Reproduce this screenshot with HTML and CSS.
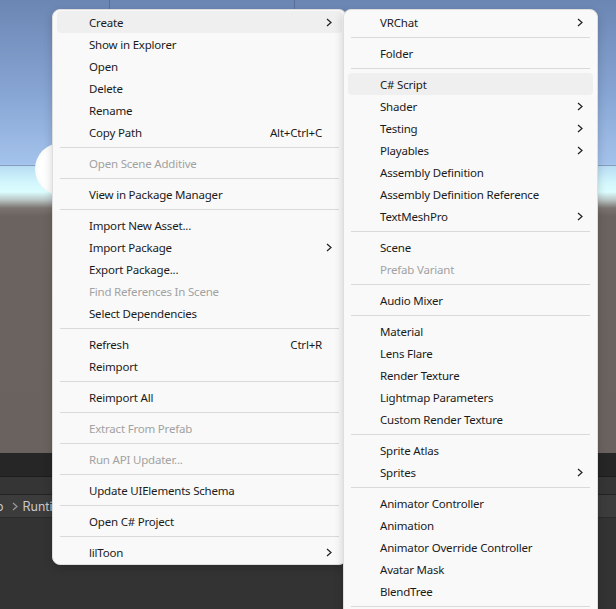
FILE: index.html
```html
<!DOCTYPE html>
<html lang="en">
<head>
    <meta charset="UTF-8">
    <title>Project context menu</title>
    <link rel="stylesheet" href="styles.css">
</head>
<body>
    <div id="editor">
        <div class="scene-view">
            <div class="grid-line vertical" style="left: 109px;"></div>
            <div class="grid-line vertical" style="left: 294px;"></div>
            <div class="grid-line horizontal"></div>
            <div class="gizmo-circle"></div>
        </div>
        <div class="toolbar-strip"></div>
        <div class="tab-strip"></div>
        <div class="breadcrumb">
            <span class="crumb-cut">o</span>
            <svg class="crumb-arrow" width="6" height="9" viewBox="0 0 6 9"><polyline points="1,1 5,4.5 1,8" fill="none" stroke="#9a9a9a" stroke-width="1.2"/></svg>
            <span class="crumb">Runtime</span>
        </div>
        <div class="project-panel"></div>
    </div>

    <!-- main context menu -->
    <div class="menu" id="mainMenu">
        <div class="item active"><span class="label">Create</span><span class="sub"><svg width="6" height="9" viewBox="0 0 6 9"><polyline points="1,1 5,4.5 1,8"/></svg></span></div>
        <div class="item"><span class="label">Show in Explorer</span><span class="sub"></span></div>
        <div class="item"><span class="label">Open</span><span class="sub"></span></div>
        <div class="item"><span class="label">Delete</span><span class="sub"></span></div>
        <div class="item"><span class="label">Rename</span><span class="sub"></span></div>
        <div class="item"><span class="label">Copy Path</span><span class="shortcut">Alt+Ctrl+C</span><span class="sub"></span></div>
        <div class="sep"></div>
        <div class="item disabled"><span class="label">Open Scene Additive</span><span class="sub"></span></div>
        <div class="sep"></div>
        <div class="item"><span class="label">View in Package Manager</span><span class="sub"></span></div>
        <div class="sep"></div>
        <div class="item"><span class="label">Import New Asset...</span><span class="sub"></span></div>
        <div class="item"><span class="label">Import Package</span><span class="sub"><svg width="6" height="9" viewBox="0 0 6 9"><polyline points="1,1 5,4.5 1,8"/></svg></span></div>
        <div class="item"><span class="label">Export Package...</span><span class="sub"></span></div>
        <div class="item disabled"><span class="label">Find References In Scene</span><span class="sub"></span></div>
        <div class="item"><span class="label">Select Dependencies</span><span class="sub"></span></div>
        <div class="sep"></div>
        <div class="item"><span class="label">Refresh</span><span class="shortcut">Ctrl+R</span><span class="sub"></span></div>
        <div class="item"><span class="label">Reimport</span><span class="sub"></span></div>
        <div class="sep"></div>
        <div class="item"><span class="label">Reimport All</span><span class="sub"></span></div>
        <div class="sep"></div>
        <div class="item disabled"><span class="label">Extract From Prefab</span><span class="sub"></span></div>
        <div class="sep"></div>
        <div class="item disabled"><span class="label">Run API Updater...</span><span class="sub"></span></div>
        <div class="sep"></div>
        <div class="item"><span class="label">Update UIElements Schema</span><span class="sub"></span></div>
        <div class="sep"></div>
        <div class="item"><span class="label">Open C# Project</span><span class="sub"></span></div>
        <div class="sep"></div>
        <div class="item"><span class="label">lilToon</span><span class="sub"><svg width="6" height="9" viewBox="0 0 6 9"><polyline points="1,1 5,4.5 1,8"/></svg></span></div>
    </div>

    <!-- Create submenu -->
    <div class="menu" id="createMenu">
        <div class="item"><span class="label">VRChat</span><span class="sub"><svg width="6" height="9" viewBox="0 0 6 9"><polyline points="1,1 5,4.5 1,8"/></svg></span></div>
        <div class="sep"></div>
        <div class="item"><span class="label">Folder</span><span class="sub"></span></div>
        <div class="sep"></div>
        <div class="item active"><span class="label">C# Script</span><span class="sub"></span></div>
        <div class="item"><span class="label">Shader</span><span class="sub"><svg width="6" height="9" viewBox="0 0 6 9"><polyline points="1,1 5,4.5 1,8"/></svg></span></div>
        <div class="item"><span class="label">Testing</span><span class="sub"><svg width="6" height="9" viewBox="0 0 6 9"><polyline points="1,1 5,4.5 1,8"/></svg></span></div>
        <div class="item"><span class="label">Playables</span><span class="sub"><svg width="6" height="9" viewBox="0 0 6 9"><polyline points="1,1 5,4.5 1,8"/></svg></span></div>
        <div class="item"><span class="label">Assembly Definition</span><span class="sub"></span></div>
        <div class="item"><span class="label">Assembly Definition Reference</span><span class="sub"></span></div>
        <div class="item"><span class="label">TextMeshPro</span><span class="sub"><svg width="6" height="9" viewBox="0 0 6 9"><polyline points="1,1 5,4.5 1,8"/></svg></span></div>
        <div class="sep"></div>
        <div class="item"><span class="label">Scene</span><span class="sub"></span></div>
        <div class="item disabled"><span class="label">Prefab Variant</span><span class="sub"></span></div>
        <div class="sep"></div>
        <div class="item"><span class="label">Audio Mixer</span><span class="sub"></span></div>
        <div class="sep"></div>
        <div class="item"><span class="label">Material</span><span class="sub"></span></div>
        <div class="item"><span class="label">Lens Flare</span><span class="sub"></span></div>
        <div class="item"><span class="label">Render Texture</span><span class="sub"></span></div>
        <div class="item"><span class="label">Lightmap Parameters</span><span class="sub"></span></div>
        <div class="item"><span class="label">Custom Render Texture</span><span class="sub"></span></div>
        <div class="sep"></div>
        <div class="item"><span class="label">Sprite Atlas</span><span class="sub"></span></div>
        <div class="item"><span class="label">Sprites</span><span class="sub"><svg width="6" height="9" viewBox="0 0 6 9"><polyline points="1,1 5,4.5 1,8"/></svg></span></div>
        <div class="sep"></div>
        <div class="item"><span class="label">Animator Controller</span><span class="sub"></span></div>
        <div class="item"><span class="label">Animation</span><span class="sub"></span></div>
        <div class="item"><span class="label">Animator Override Controller</span><span class="sub"></span></div>
        <div class="item"><span class="label">Avatar Mask</span><span class="sub"></span></div>
        <div class="item"><span class="label">BlendTree</span><span class="sub"></span></div>
        <div class="sep"></div>
        <div class="sep"></div>
    </div>
</body>
</html>
```

FILE: styles.css
```css
body {
    margin: 0;
    width: 616px;
    height: 609px;
    overflow: hidden;
    position: relative;
    font-family: "Noto Sans", sans-serif;
    background-color: #333333;
}

#editor {
    display: flex;
    flex-direction: column;
    height: 609px;
}

.scene-view {
    position: relative;
    height: 453px;
    flex: none;
    background: linear-gradient(to bottom,
        #6c86b3 0px,
        #86a4d2 90px,
        #a3c2eb 164px,
        #b8dcf3 166px,
        #d2f6fc 182px,
        #dcfdff 192px,
        #b9c4c4 200px,
        #7a7470 208px,
        #6b635f 216px,
        #6a625e 453px);
}

.grid-line {
    position: absolute;
    background-color: rgba(70, 85, 115, 0.45);
}
.grid-line.vertical {
    top: 0;
    width: 1px;
    height: 165px;
}
.grid-line.horizontal {
    left: 0;
    right: 0;
    top: 165px;
    height: 1px;
}

.gizmo-circle {
    position: absolute;
    left: 35px;
    top: 143px;
    width: 52px;
    height: 52px;
    border-radius: 50%;
    background: radial-gradient(circle at 55% 50%, #ffffff 60%, #eef2f2 100%);
}

.toolbar-strip {
    height: 23px;
    flex: none;
    background-color: #262626;
    border-bottom: 1px solid #1c1c1c;
}

.tab-strip {
    height: 17px;
    flex: none;
    background-color: #353535;
    border-bottom: 1px solid #232323;
}

.breadcrumb {
    height: 22px;
    flex: none;
    display: flex;
    align-items: center;
    gap: 5px;
    background-color: #3c3c3c;
    border-bottom: 1px solid #2a2a2a;
    font-family: Inter, sans-serif;
    font-size: 12.5px;
    color: #c8c8c8;
}
.crumb-cut {
    margin-left: -4px;
}
.crumb-arrow {
    margin-left: 3px;
}

.project-panel {
    flex: 1;
    background-color: #333333;
}

/* context menus */
.menu {
    position: absolute;
    top: 9px;
    background-color: #f9f9f9;
    border: 1px solid #dedede;
    border-radius: 8px;
    padding: 1px 4px;
    box-shadow: 0 3px 10px rgba(0, 0, 0, 0.18);
    font-size: 11.5px;
    letter-spacing: -0.2px;
    color: #1b1b1b;
}

#mainMenu {
    left: 52px;
    width: 285px;
}

#createMenu {
    left: 343px;
    width: 245px;
    z-index: 2;
}

.item {
    height: 22px;
    display: flex;
    align-items: center;
    padding-left: 32px;
    padding-right: 10px;
    border-radius: 4px;
    white-space: nowrap;
}
.item.active {
    background-color: #efefef;
}
.item.disabled {
    color: #a2a2a2;
}
.label {
    flex: 1;
}
.shortcut {
    margin-left: 20px;
}
.sub {
    width: 10px;
    display: flex;
    justify-content: flex-end;
}
.sub svg polyline {
    fill: none;
    stroke: #202020;
    stroke-width: 1.2;
}

.sep {
    height: 9px;
    position: relative;
}
.sep::after {
    content: "";
    position: absolute;
    left: 3px;
    right: 3px;
    top: 4px;
    height: 1px;
    background-color: #d9d9d9;
}
```
